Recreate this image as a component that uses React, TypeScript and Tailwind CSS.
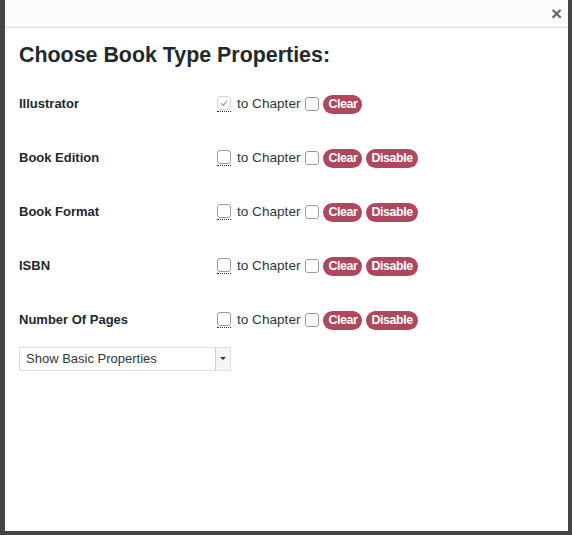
import { useState } from "react";

const rows = [
  { name: "Illustrator", checked: true, disable: false },
  { name: "Book Edition", checked: false, disable: true },
  { name: "Book Format", checked: false, disable: true },
  { name: "ISBN", checked: false, disable: true },
  { name: "Number Of Pages", checked: false, disable: true },
];

function Box({ checked, disabled }: { checked?: boolean; disabled?: boolean }) {
  return (
    <span
      className={
        "flex h-[14px] w-[14px] items-center justify-center rounded-[3px] border bg-white " +
        (disabled ? "border-[#d4d4d4]" : "border-[#9a9a9a]")
      }
    >
      {checked && (
        <svg width="10" height="10" viewBox="0 0 10 10">
          <path d="M2 5.2 L4.2 7.4 L8 2.6" fill="none" stroke="#a8a8a8" strokeWidth="1.4" />
        </svg>
      )}
    </span>
  );
}

function Pill({ children }: { children: string }) {
  return (
    <button className="flex h-[19px] items-center rounded-full bg-[#b0475e] px-[5px] text-[12.4px] font-bold leading-none tracking-[-0.4px] text-white">
      {children}
    </button>
  );
}

export default function App() {
  const [show, setShow] = useState("basic");
  return (
    <div className="h-[535px] w-[572px] bg-[#444444] font-['Liberation_Sans',Arial,sans-serif]">
      <div className="ml-[5px] flex h-[531px] w-[563px] flex-col bg-white">
        <div className="flex h-[28px] shrink-0 items-center justify-end border-b border-[#dddddd] bg-[#fcfcfc] pr-[6px]">
          <span className="text-[19px] font-bold leading-none text-[#666666]">×</span>
        </div>
        <div className="pl-[14px] pt-[12px]">
          <h1 className="text-[21.4px] font-bold leading-[30px] text-[#23282d]">
            Choose Book Type Properties:
          </h1>
          <div className="mt-[7px]">
            {rows.map((r) => (
              <div key={r.name} className="flex h-[54px] items-center text-[13px] text-[#23282d]">
                <span className="w-[198px] font-bold">{r.name}</span>
                <span className="border-b border-dotted border-[#333] pb-[1px]">
                  <Box checked={r.checked} disabled={r.checked} />
                </span>
                <span className="ml-[6px] mr-[5px] text-[13.6px] text-[#32373c]">to Chapter</span>
                <Box />
                <div className="ml-[4px] flex gap-[4px]">
                  <Pill>Clear</Pill>
                  {r.disable && <Pill>Disable</Pill>}
                </div>
              </div>
            ))}
          </div>
          <div className="flex h-[24px] w-[212px] border border-[#dddddd] bg-white">
            <select
              value={show}
              onChange={(e) => setShow(e.target.value)}
              className="flex-1 appearance-none bg-transparent pl-[6px] text-[13px] text-[#32373c] outline-none"
            >
              <option value="basic">Show Basic Properties</option>
              <option value="all">Show All Properties</option>
            </select>
            <span className="flex w-[15px] items-center justify-center border-l border-[#cccccc] bg-[#f5f5f5]">
              <svg width="6" height="4" viewBox="0 0 6 4">
                <path d="M0 0 H6 L3 3 Z" fill="#333" />
              </svg>
            </span>
          </div>
        </div>
      </div>
    </div>
  );
}
